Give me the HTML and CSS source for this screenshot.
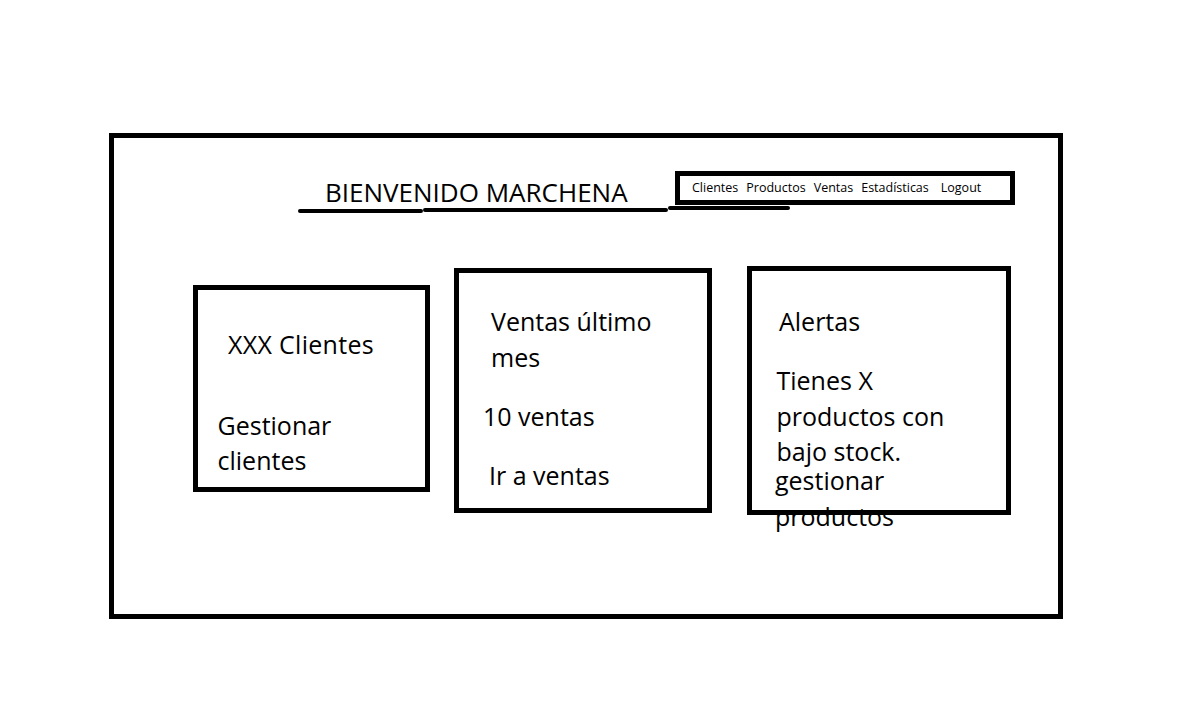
FILE: index.html
```html
<!DOCTYPE html>
<html lang="es">
<head>
<meta charset="utf-8">
<title>Bienvenido Marchena</title>
<link rel="stylesheet" href="styles.css">
</head>
<body>
<div class="frame">
  <header class="header">
    <h1 class="title">BIENVENIDO MARCHENA</h1>
    <nav class="nav">
      <span class="nav-item">Clientes</span>
      <span class="nav-item">Productos</span>
      <span class="nav-item">Ventas</span>
      <span class="nav-item">Estadísticas</span>
      <span class="nav-item nav-logout">Logout</span>
    </nav>
  </header>
  <div class="underline">
    <span class="seg seg-1"></span>
    <span class="seg seg-2"></span>
    <span class="seg seg-3"></span>
  </div>
  <main class="cards">
    <section class="card card-clients">
      <p class="txt clients-count">XXX Clientes</p>
      <p class="txt clients-link">Gestionar clientes</p>
    </section>
    <section class="card card-sales">
      <p class="txt sales-title">Ventas último mes</p>
      <p class="txt sales-count">10 ventas</p>
      <p class="txt sales-link">Ir a ventas</p>
    </section>
    <section class="card card-alerts">
      <p class="txt alerts-title">Alertas</p>
      <p class="txt alerts-msg">Tienes X productos con bajo stock.</p>
      <p class="txt alerts-link">gestionar productos</p>
    </section>
  </main>
</div>
</body>
</html>
```
FILE: styles.css
```css
* { box-sizing: border-box; }

html, body {
  margin: 0;
  padding: 0;
  background: #fff;
  color: #000;
  font-family: "Open Sans", "Noto Sans", sans-serif;
}

.frame {
  margin: 133px 0 0 109px;
  width: 954px;
  height: 486px;
  border: 5px solid #000;
  padding: 33px 43px 0 79px;
}

.header {
  display: flex;
  justify-content: space-between;
  align-items: flex-start;
}

.title {
  margin: 6px 0 0 132px;
  font-size: 26px;
  font-weight: 400;
  line-height: 30px;
  white-space: nowrap;
}

.nav {
  width: 340px;
  height: 34px;
  border: 5px solid #000;
  display: flex;
  gap: 8px;
  padding-left: 12px;
  font-size: 12.5px;
  line-height: 23px;
  white-space: nowrap;
}

.nav-logout { margin-left: 4px; }

.underline {
  display: flex;
  align-items: flex-start;
  margin: -2px 0 0 105px;
}

.seg {
  display: block;
  height: 4px;
  background: #000;
  border-radius: 2px;
}
.seg-1 { width: 125px; margin-top: 4px; }
.seg-2 { width: 245px; margin-top: 3px; }
.seg-3 { width: 122px; margin-top: 1px; }

.cards {
  display: flex;
  align-items: flex-start;
  gap: 24px;
  margin-top: 53px;
}

.card {
  border: 5px solid #000;
  flex: none;
}

.card-clients {
  width: 237px;
  height: 207px;
  margin-top: 19px;
  padding-top: 36.5px;
}

.card-sales {
  width: 258px;
  height: 245px;
  margin-top: 2px;
  padding-top: 31px;
}

.card-alerts {
  width: 264px;
  height: 249px;
  margin-left: 11px;
  padding-top: 33px;
}

.txt {
  margin: 0;
  font-size: 25px;
  line-height: 35.5px;
  max-width: 195px;
}

.clients-count { margin-left: 30px; letter-spacing: 0.3px; }
.clients-link { margin: 45.5px 0 0 19.5px; }

.sales-title { margin-left: 32px; }
.sales-count { margin: 24px 0 0 24px; }
.sales-link { margin: 23.5px 0 0 30px; }

.alerts-title { margin-left: 27px; }
.alerts-msg { margin: 23.5px 0 0 24.5px; }
.alerts-link { margin: -6.5px 0 0 23px; }
```
